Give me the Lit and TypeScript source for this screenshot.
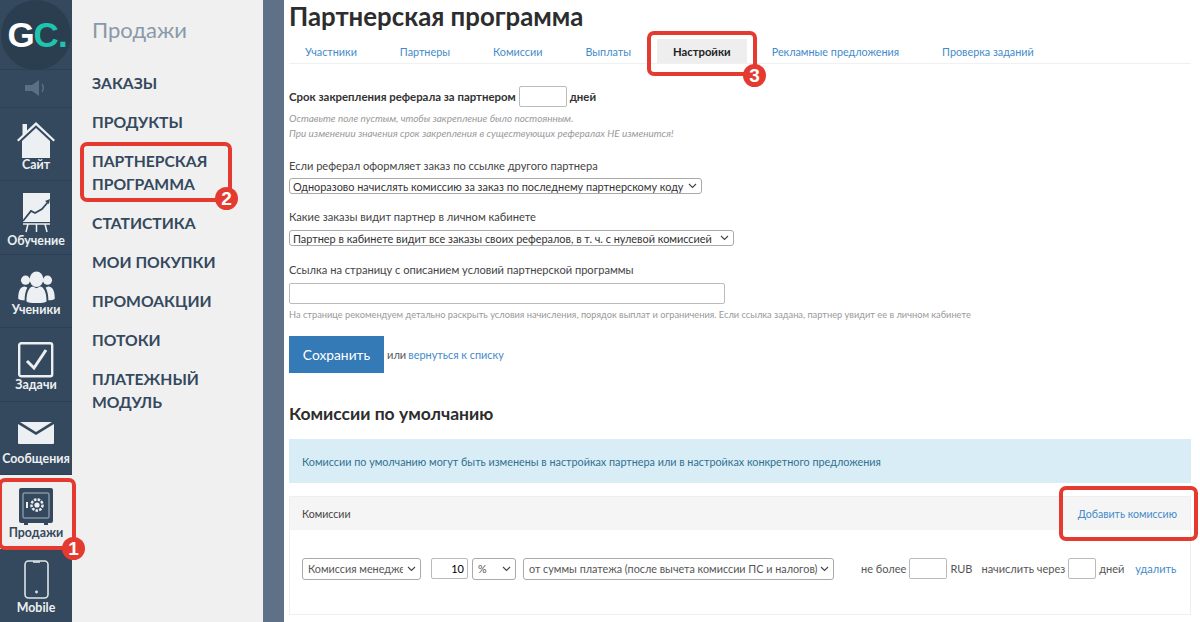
import { LitElement, html, css, svg } from "lit";
import { customElement } from "lit/decorators.js";

const icons: Record<string, unknown> = {
  house: svg`<svg width="38" height="36" viewBox="0 0 38 36"><path fill="#edf0f2" d="M19 0 38 18l-1.500 1.600L19 3.200 1.500 19.600 0 18 5.500 12.800V2h4.500v6.500z"/><path fill="#edf0f2" d="M19 6 33 19v17H5V19z"/></svg>`,
  chart: svg`<svg width="32" height="41" viewBox="0 0 32 41"><path fill="#edf0f2" d="M3 0h27v29H3z"/><path fill="none" stroke="#34495e" stroke-width="1.800" d="M3 28 11 18l4 2 7-4 6-7"/><path fill="#34495e" d="M25 8l5-2-1 5z"/><path stroke="#edf0f2" stroke-width="1.500" d="M3 31h27M8 31l-2 8M16.500 31v8M25 31l2 8"/></svg>`,
  people: svg`<svg width="37" height="32" viewBox="0 0 40 35"><g fill="#edf0f2"><circle cx="8" cy="10" r="5"/><circle cx="32" cy="10" r="5"/><path d="M0 30c0-9 3-13 7-13l3 1c-2 4-3 8-3 14-4 0-7-1-7-2zM40 30c0-9-3-13-7-13l-3 1c2 4 3 8 3 14 4 0 7-1 7-2z"/><ellipse cx="20" cy="9" rx="7.500" ry="8.500"/><path d="M9 33c0-11 4-16 7-16l4 2 4-2c3 0 7 5 7 16-3 3-19 3-22 0z"/></g></svg>`,
  check: svg`<svg width="36" height="36" viewBox="0 0 36 36"><rect x="1.200" y="1.200" width="33" height="33" rx="2" fill="#34495e" stroke="#edf0f2" stroke-width="2.400"/><path fill="none" stroke="#edf0f2" stroke-width="3" d="M9 19l7 7L28 8"/></svg>`,
  mail: svg`<svg width="36" height="30" viewBox="0 0 36 30"><path fill="#edf0f2" d="M0 2 18 13 36 2V21a1 1 0 0 1-1 1H1a1 1 0 0 1-1-1z"/><path fill="#edf0f2" d="M2 0h32L18 10z"/></svg>`,
  safe: svg`<svg width="36" height="38" viewBox="0 0 36 38"><path fill="#34495e" d="M3 0h30a2 2 0 0 1 2 2v31a2 2 0 0 1-2 2h-3v2h-4v-2H10v2H6v-2H3a2 2 0 0 1-2-2V2a2 2 0 0 1 2-2z"/><rect x="5" y="5" width="26" height="25" rx="1" fill="none" stroke="#aeb8c2" stroke-width="1"/><circle cx="19" cy="17" r="5.500" fill="none" stroke="#edf0f2" stroke-width="2.500" stroke-dasharray="2.500 1.200"/><circle cx="19" cy="17" r="2.600" fill="#edf0f2"/><path stroke="#edf0f2" stroke-width="2" d="M9 14v6"/></svg>`,
  phone: svg`<svg width="25" height="41" viewBox="0 0 25 41"><rect x="1" y="1" width="23" height="37" rx="3.500" fill="none" stroke="#dfe3e7" stroke-width="1.600"/><path stroke="#dfe3e7" stroke-width="1.600" d="M9 2h7"/><circle cx="12.500" cy="32" r="1.400" fill="#dfe3e7"/></svg>`,
};

const rail = [
  { label: "Сайт", icon: "house", pad: 8 },
  { label: "Обучение", icon: "chart", pad: 6 },
  { label: "Ученики", icon: "people", pad: 10 },
  { label: "Задачи", icon: "check", pad: 9 },
  { label: "Сообщения", icon: "mail", pad: 8 },
  { label: "Продажи", icon: "safe", pad: 9, active: true },
  { label: "Mobile", icon: "phone", pad: 7 },
];
const subnav = ["Заказы", "Продукты", "Партнерская программа", "Статистика", "Мои покупки", "Промоакции", "Потоки", "Платежный модуль"];
const tabs = ["Участники", "Партнеры", "Комиссии", "Выплаты", "Настройки", "Рекламные предложения", "Проверка заданий"];

@customElement("app-root")
export class AppRoot extends LitElement {
  static styles = css`
    :host { display: block; position: relative; width: 1200px; height: 622px; overflow: hidden; background: #fff;
      font-family: Lato, "Noto Sans", sans-serif; color: #333; font-size: 11.1px; }
    * { box-sizing: border-box; }
    .page { display: flex; height: 622px; }
    .rail { width: 72px; flex: none; background: #34495e; color: #edf0f2; display: flex; flex-direction: column; }
    .logo { height: 70px; display: flex; align-items: center; justify-content: center; border-bottom: 1px solid #2d4053; }
    .disc { width: 70px; height: 70px; border-radius: 50%; background: #2b3e50; display: flex; align-items: center; justify-content: center;
      font: 700 35px "Liberation Sans", sans-serif; letter-spacing: -1px; padding-left: 2px; }
    .disc b { color: #fff; } .disc i { color: #1fc4ae; font-style: normal; font-weight: 700; }
    .mute { height: 38px; display: flex; align-items: center; justify-content: center; border-bottom: 1px solid #2d4053; }
    .item { height: 73.500px; display: flex; flex-direction: column; align-items: center; justify-content: flex-end;
      border-bottom: 1px solid #2d4053; font-weight: 700; font-size: 12.400px; line-height: 14px; white-space: nowrap; }
    .item svg { display: block; }
    .item.active { background: #f0f0f0; color: #34495e; border-bottom: 0; }
    .item.last { border-bottom: 0; }
    .sub { width: 191px; flex: none; background: #f0f0f0; padding: 17px 0 0 20px; }
    .sub h2 { margin: 0 0 29px; font-size: 22px; line-height: 26px; font-weight: 400; color: #8a99a8; }
    .sub a { display: block; margin-bottom: 16px; font-size: 15.700px; line-height: 23px; font-weight: 700; color: #34495e; text-transform: uppercase; max-width: 150px; }
    .strip { width: 21px; flex: none; background: #5f7186; }
    .main { flex: 1; min-width: 0; padding: 0 9px 0 5px; }
    h1 { margin: 1px 0 0; font-size: 25.800px; line-height: 30px; font-weight: 700; color: #2d2d2d; }
    .tabs { display: flex; height: 31px; margin-top: 2px; border-bottom: 1px solid #f0f0f0; padding-left: 16px; }
    .tab { color: #428bca; font-size: 10.800px; display: flex; align-items: center; padding: 6px 0 0; margin-right: 43px; white-space: nowrap; }
    .tab.on { background: #eee; color: #222; font-weight: 700; font-size: 11.300px; padding: 0 16px; height: 24px; margin: 6px 25px 0 -17px; }
    .row1 { display: flex; align-items: center; gap: 3px; margin-top: 22px; font-weight: 700; font-size: 11.400px; color: #333; }
    input { border: 1px solid #bbb; border-radius: 2px; background: #fff; height: 21px; padding: 0 3px; font: inherit; font-weight: 400; }
    .w48 { width: 48px; }
    .hint { font-size: 9.950px; font-style: italic; color: #999; line-height: 15px; margin-top: 4px; }
    .hint.up { font-size: 9.250px; font-style: normal; margin-top: 3px; }
    .label { color: #444; line-height: 16px; margin: 0 0 5px; }
    .s1 .label { margin-bottom: 4px; }
    select { appearance: none; -webkit-appearance: none; font: 400 10.900px Lato, sans-serif; color: #333; height: 16px; border: 1px solid #aaa; border-radius: 3px;
      padding: 0 14px 0 3px; display: block;
      background: #fff url("data:image/svg+xml,%3Csvg xmlns='http://www.w3.org/2000/svg' width='9' height='6'%3E%3Cpath fill='none' stroke='%23444' stroke-width='1.100' d='M1 1l3.500 3.500L8 1'/%3E%3C/svg%3E") no-repeat right 4px center; }
    .s1 { margin-top: 17px; } .s2 { margin-top: 15px; } .s3 { margin-top: 16px; }
    .w413 { width: 413px; } .w445 { width: 445px; }
    .url { width: 436px; height: 21px; display: block; }
    .btn { display: inline-block; border: 0; background: #337ab7; color: #fff; font: 400 13.800px Lato, sans-serif; width: 95px; height: 37px; margin-right: 1px; }
    .save { margin-top: 14px; display: flex; align-items: center; gap: 2px; color: #555; }
    .link { color: #428bca; text-decoration: none; }
    .save .link { font-size: 10.900px; }
    h3 { margin: 30px 0 0; font-size: 17.500px; line-height: 22px; font-weight: 700; color: #2d2d2d; }
    .info { margin-top: 14px; height: 44px; background: #d9edf7; color: #31708f; font-size: 10.800px; display: flex; align-items: center; padding-left: 13px; }
    .panel { margin-top: 13px; border: 1px solid #eee; height: 119px; }
    .head { height: 33px; background: #f5f5f5; display: flex; align-items: center; justify-content: space-between; padding: 0 13px 0 12px; color: #444; font-size: 10.600px; }
    .body { height: 84px; display: flex; align-items: center; padding: 0 0 7px 12px; color: #555; font-size: 11px; white-space: nowrap; }
    .body select { height: 22px; color: #555; padding-left: 5px; padding-right: 13px; font-size: 10.800px; }
    .body input { height: 21px; text-align: right; }
    .body select.c1 { width: 119px; padding-right: 17px; } .c2 { width: 37px; margin-left: 10px; } .c3 { width: 44px; margin-left: 4px; } .c4 { width: 311px; margin-left: 7px; }
    .c5 { margin-left: 27px; } .c6 { width: 38px; margin: 0 3px; } .c7 { margin-left: 9px; } .c8 { width: 28px; margin: 0 3px; } .c9 { margin-left: 11px; }
    .mark { position: absolute; border: 4px solid #e53a2f; border-radius: 7px; pointer-events: none; }
    .num { position: absolute; width: 23px; height: 23px; border-radius: 50%; background: #e53a2f; color: #fff; font: 700 19px/23px "Liberation Sans", sans-serif; text-align: center; }
    .m1 { left: -2px; top: 478px; width: 78px; height: 72px; } .n1 { left: 62px; top: 537px; }
    .m2 { left: 80px; top: 142px; width: 152px; height: 60px; } .n2 { left: 215px; top: 187px; }
    .m3 { left: 647px; top: 31px; width: 110px; height: 45px; } .n3 { left: 743px; top: 64px; }
    .m4 { left: 1059px; top: 486px; width: 139px; height: 55px; }
  `;

  render() {
    return html`
      <div class="page">
        <nav class="rail">
          <div class="logo"><div class="disc"><b>G</b><i>C.</i></div></div>
          <div class="mute">
            <svg width="24" height="16" viewBox="0 0 24 16"><path fill="#5b6e82" d="M1 5h7l7-5v16l-7-5H1z"/><path fill="none" stroke="#5b6e82" stroke-width="1.500" d="M18 4q2.500 4 0 8"/></svg>
          </div>
          ${rail.map((r, i) => html`<div class="item ${r.active ? "active" : ""} ${i === rail.length - 1 ? "last" : ""}" style="padding-bottom:${r.pad}px">${icons[r.icon]}<span>${r.label}</span></div>`)}
        </nav>
        <aside class="sub">
          <h2>Продажи</h2>
          ${subnav.map((s) => html`<a>${s}</a>`)}
        </aside>
        <div class="strip"></div>
        <main class="main">
          <h1>Партнерская программа</h1>
          <div class="tabs">
            ${tabs.map((t) => html`<div class="tab ${t === "Настройки" ? "on" : ""}">${t}</div>`)}
          </div>
          <div class="row1">Срок закрепления реферала за партнером <input class="w48" /> дней</div>
          <div class="hint">Оставьте поле пустым, чтобы закрепление было постоянным.<br />При изменении значения срок закрепления в существующих рефералах НЕ изменится!</div>
          <div class="s1">
            <div class="label">Если реферал оформляет заказ по ссылке другого партнера</div>
            <select class="w413"><option>Одноразово начислять комиссию за заказ по последнему партнерскому коду</option></select>
          </div>
          <div class="s2">
            <div class="label">Какие заказы видит партнер в личном кабинете</div>
            <select class="w445"><option>Партнер в кабинете видит все заказы своих рефералов, в т. ч. с нулевой комиссией</option></select>
          </div>
          <div class="s3">
            <div class="label">Ссылка на страницу с описанием условий партнерской программы</div>
            <input class="url" />
            <div class="hint up">На странице рекомендуем детально раскрыть условия начисления, порядок выплат и ограничения. Если ссылка задана, партнер увидит ее в личном кабинете</div>
          </div>
          <div class="save"><button class="btn">Сохранить</button> или <a class="link">вернуться к списку</a></div>
          <h3>Комиссии по умолчанию</h3>
          <div class="info">Комиссии по умолчанию могут быть изменены в настройках партнера или в настройках конкретного предложения</div>
          <div class="panel">
            <div class="head"><span>Комиссии</span><a class="link">Добавить комиссию</a></div>
            <div class="body">
              <select class="c1"><option>Комиссия менеджера</option></select>
              <input class="c2" value="10" />
              <select class="c3"><option>%</option></select>
              <select class="c4"><option>от суммы платежа (после вычета комиссии ПС и налогов)</option></select>
              <span class="c5">не более</span>
              <input class="c6" />
              <span>RUB</span>
              <span class="c7">начислить через</span>
              <input class="c8" />
              <span>дней</span>
              <a class="link c9">удалить</a>
            </div>
          </div>
        </main>
      </div>
      <div class="mark m1"></div><div class="num n1">1</div>
      <div class="mark m2"></div><div class="num n2">2</div>
      <div class="mark m3"></div><div class="num n3">3</div>
      <div class="mark m4"></div>
    `;
  }
}
